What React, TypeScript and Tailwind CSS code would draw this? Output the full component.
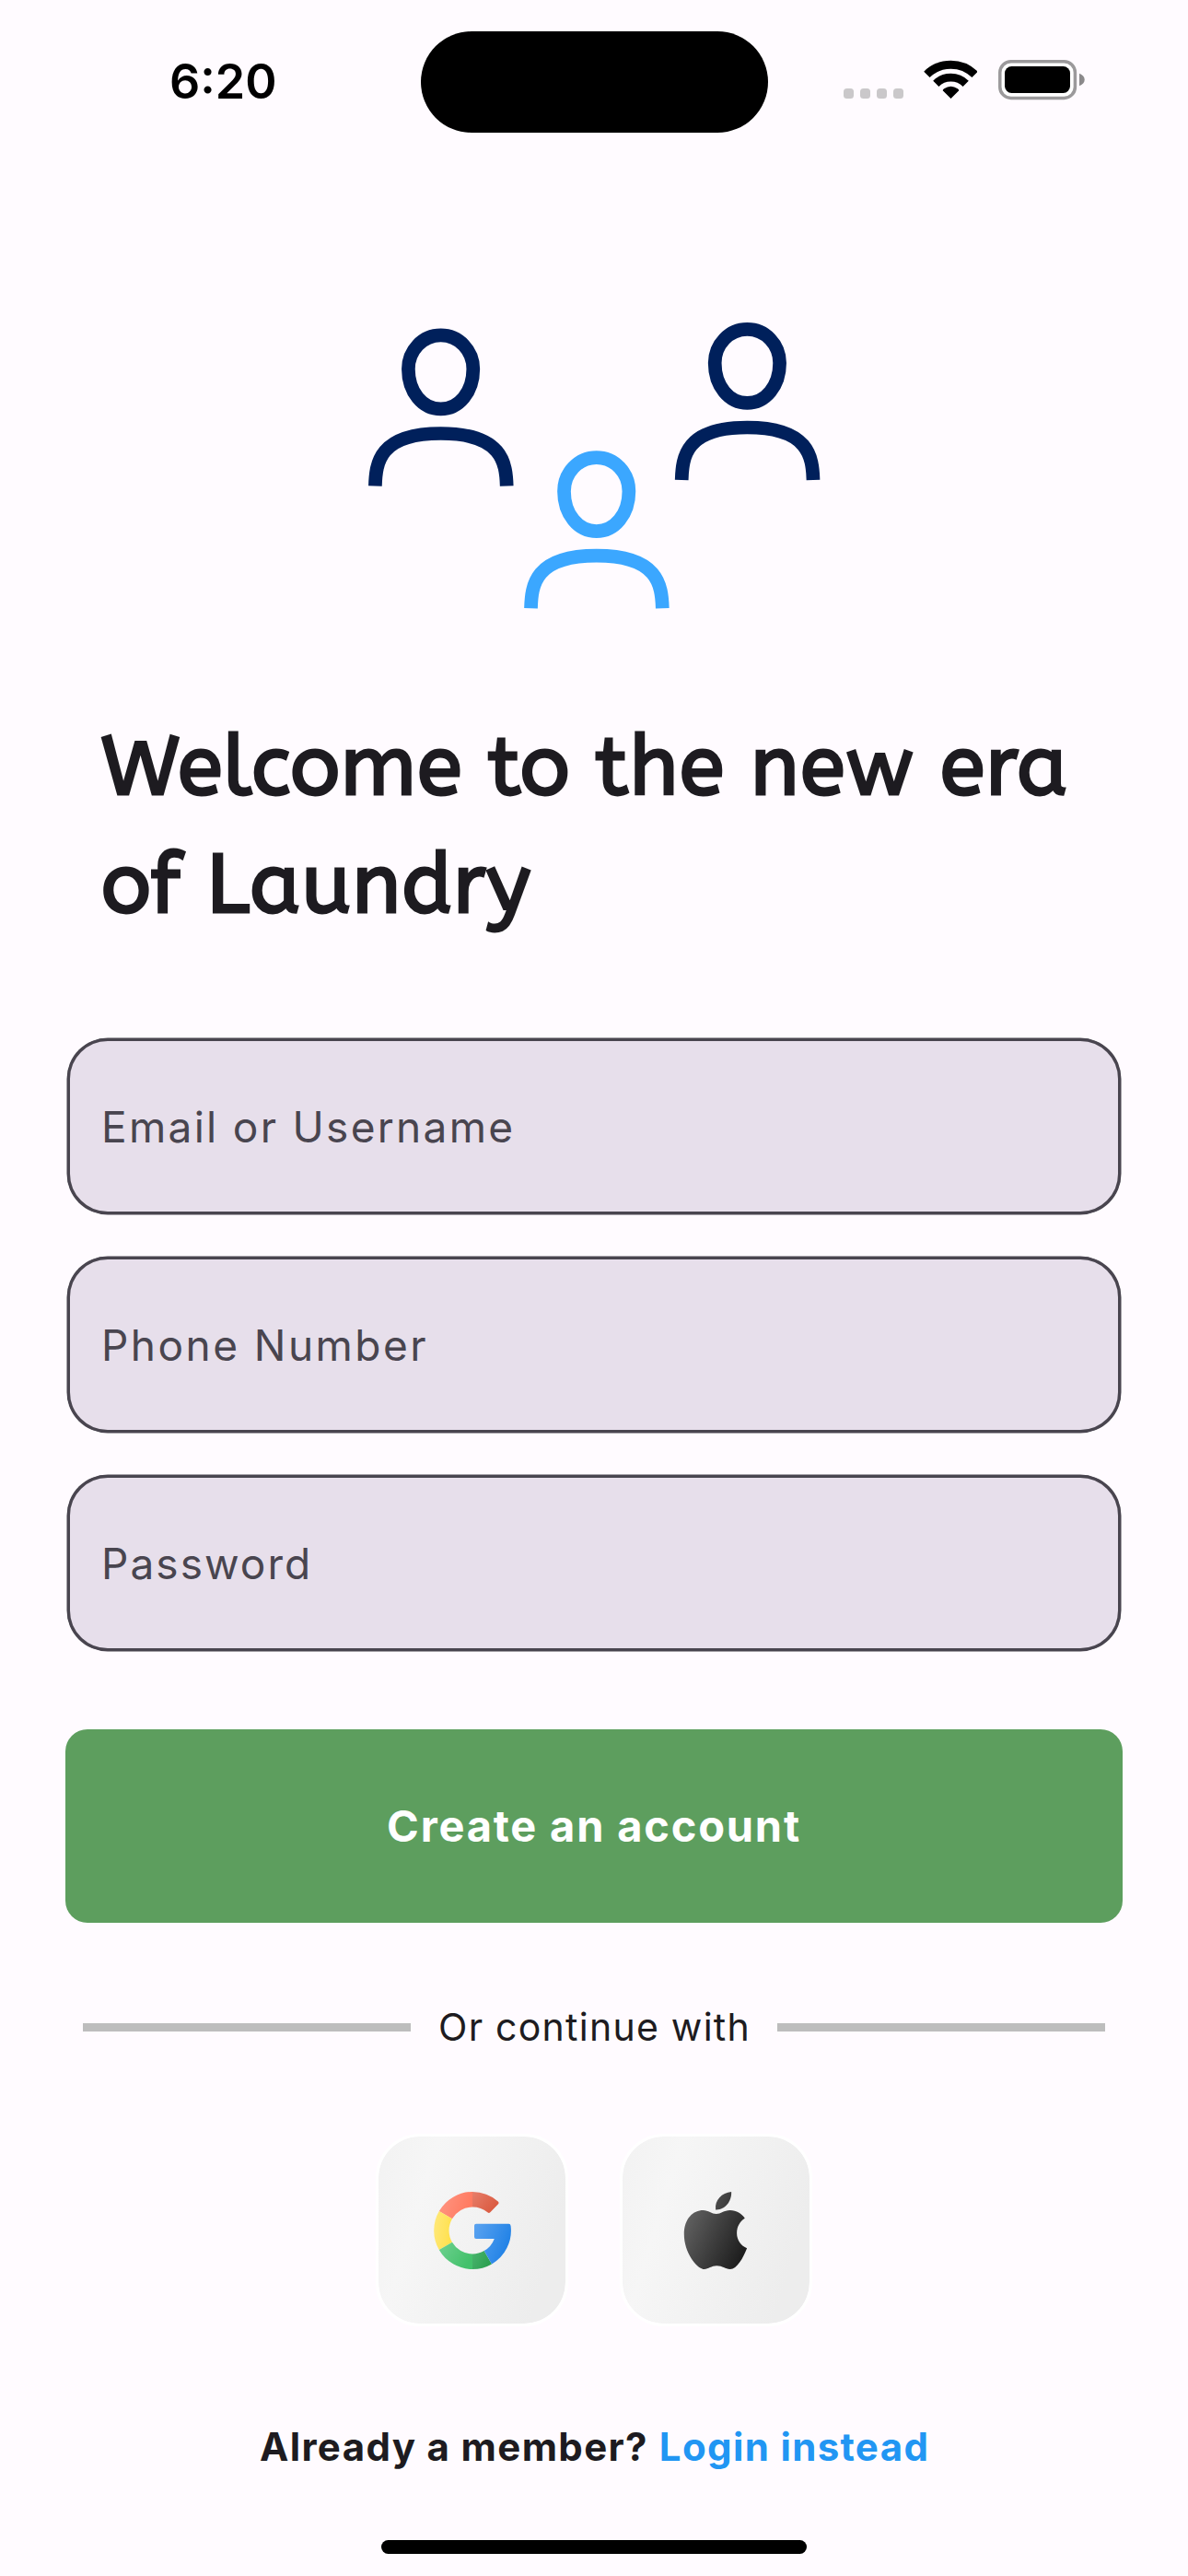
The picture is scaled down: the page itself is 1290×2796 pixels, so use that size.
const FIELDS = [
  { label: "Email or Username", tracking: "tracking-[2.3px]" },
  { label: "Phone Number", tracking: "tracking-[2.45px]" },
  { label: "Password", tracking: "tracking-[2.05px]" },
];

function StatusBar() {
  return (
    <header className="flex h-[178px] items-start pt-[34px]">
      <div className="w-[457px] pl-[184px] text-[52px] leading-[110px] font-semibold text-black">6:20</div>
      <div className="h-[110px] w-[377px] rounded-full bg-black" />
      <div className="flex h-[110px] flex-1 items-start pt-[31px] pl-[82px]">
        <div className="mt-[31px] flex gap-[7px]">
          {[0, 1, 2, 3].map((i) => (
            <span key={i} className="size-[11px] rounded-[3.5px] bg-[#cac8ca]" />
          ))}
        </div>
        <svg className="ml-[22px] h-[43px] w-[58px]" viewBox="-0.5 0 58 43" fill="none" stroke="#000">
          <path d="M2.9 15.9A37 37 0 0 1 55.1 15.9" strokeWidth="9" />
          <path d="M12.8 25.8A23 23 0 0 1 45.2 25.8" strokeWidth="8.8" />
          <path d="M29 42L20.2 33.3Q20.2 32 21.6 31.2A13 13 0 0 1 36.4 31.2Q37.8 32 37.8 33.3Z" fill="#000" stroke="none" />
        </svg>
        <svg className="ml-[23px] h-[44px] w-[95px]" viewBox="0 0 95 44">
          <rect x="1.8" y="1.8" width="81.6" height="39.6" rx="12" fill="#fff" stroke="#9b999b" strokeWidth="3.5" />
          <rect x="7" y="7" width="71" height="29" rx="7.5" fill="#000" />
          <path d="M88 14.8C91.5 16 93.7 18.6 93.7 21.5C93.7 24.5 91.5 27 88 28.2Z" fill="#8b898b" />
        </svg>
      </div>
    </header>
  );
}

function Person({ x, y, color }: { x: number; y: number; color: string }) {
  return (
    <g transform={`translate(${x} ${y})`} fill="none" stroke={color} strokeWidth="14.7">
      <path d="M79 7.4C98.8 7.4 114.2 24 114.2 44C114.2 69 98.8 87.4 79 87.4C59.2 87.4 43.8 69 43.8 44C43.8 24 59.2 7.4 79 7.4Z" />
      <path d="M7.8 171C8.5 146 12 114 79 114C146 114 149.9 146 150.6 171" />
    </g>
  );
}

function GoogleLogo() {
  return (
    <svg className="size-[84px]" viewBox="0 0 84 84">
      <defs>
        <linearGradient id="g-red" x1="0" y1="0" x2="1" y2="0.3">
          <stop stopColor="#ff9784" />
          <stop offset="1" stopColor="#ff7a60" />
        </linearGradient>
        <linearGradient id="g-red-dark" x1="0" y1="0" x2="1" y2="0.6">
          <stop stopColor="#e77e6a" />
          <stop offset="1" stopColor="#da5a40" />
        </linearGradient>
        <linearGradient id="g-yellow" x1="0" y1="0" x2="1" y2="0.3">
          <stop stopColor="#ffe97c" />
          <stop offset="1" stopColor="#ffe14f" />
        </linearGradient>
        <linearGradient id="g-green" x1="0" y1="0" x2="1" y2="0.5">
          <stop stopColor="#6fd190" />
          <stop offset="1" stopColor="#43c16b" />
        </linearGradient>
        <linearGradient id="g-green-dark" x1="0" y1="0" x2="1" y2="0.5">
          <stop stopColor="#4ab46e" />
          <stop offset="1" stopColor="#2ca050" />
        </linearGradient>
        <linearGradient id="g-blue" x1="0" y1="0" x2="1" y2="0.4">
          <stop stopColor="#5ba3f0" />
          <stop offset="1" stopColor="#2182e6" />
        </linearGradient>
      </defs>
      <path fill="url(#g-red)" d="M5.8 21A42 42 0 0 1 42 0V16.5A25.5 25.5 0 0 0 20 29.2Z" />
      <path fill="url(#g-red-dark)" d="M42 0A42 42 0 0 1 69.8 10.5Q71.3 12 69.8 13.6L61.3 22.2Q60 23.5 58.4 22.3A25.5 25.5 0 0 0 42 16.5Z" />
      <path fill="url(#g-yellow)" d="M5.8 21A42 42 0 0 0 5.8 63L20 54.8A25.5 25.5 0 0 1 20 29.2Z" />
      <path fill="url(#g-green)" d="M5.8 63A42 42 0 0 0 42 84V67.5A25.5 25.5 0 0 1 20 54.8Z" />
      <path fill="url(#g-green-dark)" d="M42 84A42 42 0 0 0 63 78.4L54.7 64.1A25.5 25.5 0 0 1 42 67.5Z" />
      <path fill="url(#g-blue)" d="M46 34.7H81.5Q83.3 34.7 83.6 37A42 42 0 0 1 63 78.4L54.7 64.1A25.5 25.5 0 0 0 65.8 51H46Q44 51 44 49V36.7Q44 34.7 46 34.7Z" />
    </svg>
  );
}

function AppleLogo() {
  return (
    <svg className="size-[84px]" viewBox="-6.8 0 84 84">
      <defs>
        <linearGradient id="a-body" x1="0" y1="0.3" x2="1" y2="0.75">
          <stop stopColor="#5e5e5e" />
          <stop offset="1" stopColor="#1a1a1a" />
        </linearGradient>
        <linearGradient id="a-leaf" x1="0" y1="0" x2="1" y2="0.5">
          <stop stopColor="#505050" />
          <stop offset="1" stopColor="#3a3a3a" />
        </linearGradient>
      </defs>
      <path fill="url(#a-body)" d="M35 24C40 24 43 20 50 20C57 20 62.5 23.5 66 28.7C61 32 57.3 37 57.3 45C57.3 52.5 62 58.5 68.3 61.3C64 72 57.5 84 50 84C44.5 84 42 80.3 35.5 80.3C29.5 80.3 26.5 84 22 84C14 84 0 66 0 46C0 29 10 20 20.7 20C26.5 20 30 24 35 24Z" />
      <path fill="url(#a-leaf)" d="M51.3 0C41 1 33 9 34.3 19.4C44 20 52 10.5 51.3 0Z" />
    </svg>
  );
}

const TILE =
  "flex size-[209px] items-center justify-center rounded-[48px] border-[3px] border-white bg-[linear-gradient(107deg,#f2f2f2,#f6f6f6_25%,#ededed_85%)] bg-clip-padding pt-px pl-px";

export default function App() {
  return (
    <main className="flex h-[2796px] w-[1290px] flex-col bg-[#fffbff] font-['Inter',sans-serif] text-[#1d1b20]">
      <StatusBar />
      <svg className="mt-[172px] ml-[400px] h-[311px] w-[492px] overflow-visible" viewBox="0 0 492 311">
        <Person x={-0.4} y={6.5} color="#00205b" />
        <Person x={332.4} y={0} color="#00205b" />
        <Person x={168.7} y={139.2} color="#3ba7ff" />
      </svg>
      <h1 className="mt-[108px] ml-[110px] font-['ABeeZee','Inter',sans-serif] text-[90px] leading-[128px] font-bold tracking-[0.7px] whitespace-nowrap [font-feature-settings:'cv11']">
        Welcome to the new era
        <br />
        of Laundry
      </h1>
      <form className="mt-[102px] flex flex-col gap-[46px] px-[73px]">
        {FIELDS.map((f) => (
          <label
            key={f.label}
            className="flex h-[191px] items-center rounded-[44px] border-[3px] border-[#49454f] bg-[#e7dfeb] pt-[2px] pl-[34px] text-[46px] text-[#49454f] shadow-[0_0_0_0.5px_#49454f]"
          >
            <span className={f.tracking}>{f.label}</span>
          </label>
        ))}
      </form>
      <button className="mx-[71px] mt-[85px] h-[210px] rounded-[24px] bg-[#5d9e5e] text-[47px] font-[650] tracking-[1.8px] text-white">
        Create an account
      </button>
      <div className="mx-[90px] mt-[83px] flex h-[61px] items-center">
        <span className="h-[9px] w-[356px] bg-[#bdbdbd]" />
        <span className="flex-1 pl-[1px] text-center text-[41px] tracking-[1.25px]">Or continue with</span>
        <span className="h-[9px] w-[356px] bg-[#bdbdbd]" />
      </div>
      <div className="mt-[85px] flex justify-center gap-[56px]">
        <div className={TILE}>
          <GoogleLogo />
        </div>
        <div className={TILE}>
          <AppleLogo />
        </div>
      </div>
      <p className="mt-[99px] ml-[282px] flex h-[62px] items-center gap-[12px] text-[42px] font-[650] tracking-[1.35px] whitespace-nowrap">
        <span>Already a member?</span>
        <a className="text-[#2196f3]">Login instead</a>
      </p>
      <div className="mt-[71px] ml-[414px] h-[15px] w-[462px] rounded-full bg-black" />
    </main>
  );
}
